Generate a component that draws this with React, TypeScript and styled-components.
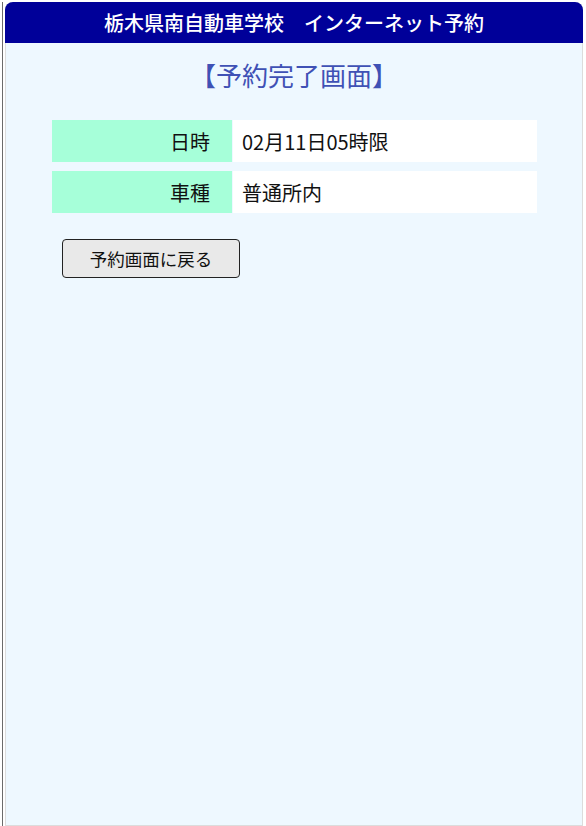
import React from "react";
import styled, { createGlobalStyle } from "styled-components";

const Global = createGlobalStyle`
  html, body { margin: 0; padding: 0; background: #ffffff; }
  body { font-family: "Noto Sans CJK JP", "Noto Sans", sans-serif; }
`;

const Frame = styled.div`
  height: 826px;
  box-sizing: border-box;
  padding: 2px 3px 0 2px;
  display: flex;
`;

const Edge = styled.div`
  width: 1px;
  background: #6b6b6b;
  margin-right: 2px;
`;

const Panel = styled.div`
  flex: 1;
  display: flex;
  flex-direction: column;
  background: #eef8ff;
  border: 1px solid #dcdcdc;
  border-top: none;
  border-radius: 8px 8px 0 0;
`;

const Header = styled.div`
  height: 41px;
  background: #000099;
  color: #ffffff;
  border-radius: 8px 8px 0 0;
  margin: 0 -1px;
  display: flex;
  align-items: center;
  justify-content: center;
  font-size: 20px;
  font-weight: 500;
`;

const Title = styled.h1`
  margin: 12px 0 0;
  text-align: center;
  font-size: 26px;
  font-weight: 400;
  color: #3f51b5;
  line-height: 40px;
`;

const Table = styled.div`
  margin: 25px 45px 0 46px;
  display: flex;
  flex-direction: column;
  gap: 9px;
`;

const Row = styled.div`
  display: grid;
  grid-template-columns: 180px 1fr;
  gap: 1px;
  height: 42px;
`;

const Label = styled.div`
  background: #a6ffd9;
  display: flex;
  align-items: center;
  justify-content: flex-end;
  padding-right: 22px;
  font-size: 20px;
  color: #111;
`;

const Value = styled.div`
  background: #ffffff;
  display: flex;
  align-items: center;
  padding-left: 9px;
  font-size: 20px;
  color: #111;
`;

const Actions = styled.div`
  margin: 26px 0 0 56px;
`;

const Button = styled.button`
  width: 178px;
  height: 39px;
  background: #e9e9e9;
  border: 1px solid #222;
  border-radius: 4px;
  font-family: "Noto Sans CJK JP", sans-serif;
  font-size: 17.5px;
  color: #111;
  padding: 0;
  cursor: pointer;
`;

const rows = [
  { label: "日時", value: "02月11日05時限" },
  { label: "車種", value: "普通所内" },
];

export default function App() {
  return (
    <>
      <Global />
      <Frame>
        <Edge />
        <Panel>
          <Header>栃木県南自動車学校　インターネット予約</Header>
          <Title>【予約完了画面】</Title>
          <Table>
            {rows.map((r) => (
              <Row key={r.label}>
                <Label>{r.label}</Label>
                <Value>{r.value}</Value>
              </Row>
            ))}
          </Table>
          <Actions>
            <Button>予約画面に戻る</Button>
          </Actions>
        </Panel>
      </Frame>
    </>
  );
}
